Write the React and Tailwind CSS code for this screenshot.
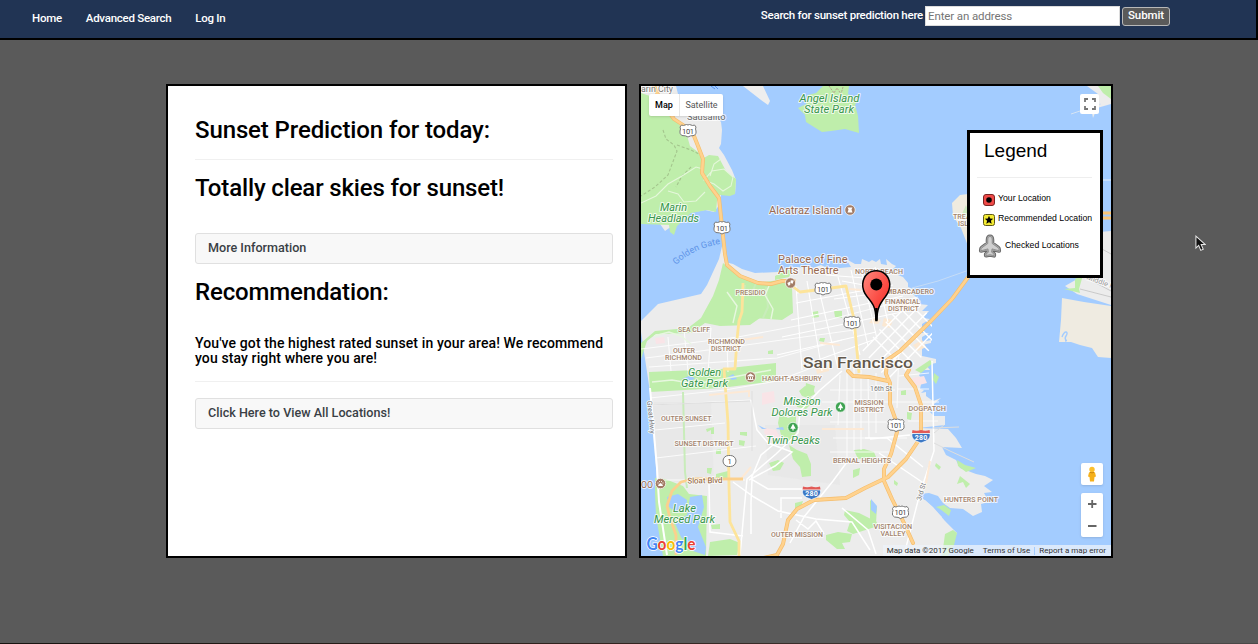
import React from "react";

const WATER = "#a3ccff";
const LAND = "#ececec";
const PARK = "#bfeeab";
const ROAD = "#fbc677";
const YELLOW = "#fde49a";

function Label({ x, y, w, size = 7, fill = "#a2836c", weight = 400, italic = false, rotate, children }) {
  return (
    <text
      x={x}
      y={y}
      textLength={w}
      lengthAdjust="spacingAndGlyphs"
      fontSize={size}
      fontWeight={weight}
      fontStyle={italic ? "italic" : "normal"}
      fill={fill}
      stroke="#ffffff"
      strokeOpacity="0.75"
      strokeWidth="2"
      strokeLinejoin="round"
      paintOrder="stroke"
      transform={rotate ? `rotate(${rotate} ${x} ${y})` : undefined}
    >
      {children}
    </text>
  );
}

const parkLabels = [
  ["Angel Island", 799.5, 102, 60],
  ["State Park", 804, 112.5, 50],
  ["Marin", 660, 210.5, 27],
  ["Headlands", 648, 221.5, 51],
  ["Golden", 688, 376, 33],
  ["Gate Park", 681, 387, 47],
  ["Mission", 783.5, 404.5, 37],
  ["Dolores Park", 771.5, 415.5, 61],
  ["Twin Peaks", 766, 444, 54],
  ["Lake", 673, 512, 23],
  ["Merced Park", 654, 522.5, 61],
];

const districtLabels = [
  ["PRESIDIO", 735.5, 294.5, 30],
  ["NORTH BEACH", 855, 273.5, 48],
  ["EMBARCADERO", 882, 293.5, 52],
  ["FINANCIAL", 885, 304, 35],
  ["DISTRICT", 888, 311, 31],
  ["SEA CLIFF", 678, 332, 32],
  ["RICHMOND", 708, 344, 37],
  ["DISTRICT", 711, 351, 30],
  ["OUTER", 673, 352.5, 22],
  ["RICHMOND", 665, 360, 37],
  ["HAIGHT-ASHBURY", 762, 381, 60],
  ["MISSION", 854.5, 405, 29],
  ["DISTRICT", 854, 412, 30],
  ["DOGPATCH", 908.5, 410.5, 37.5],
  ["OUTER SUNSET", 661, 420.5, 50.5],
  ["SUNSET DISTRICT", 674.5, 446, 59],
  ["BERNAL HEIGHTS", 833, 462.5, 58],
  ["HUNTERS POINT", 944, 502, 54],
  ["VISITACION", 873.5, 529, 38.5],
  ["VALLEY", 880.5, 536, 25],
  ["OUTER MISSION", 771, 536.5, 52],
];

const usShields = [[688, 131], [722, 228], [823, 289], [852, 323], [896, 425.5], [900.5, 512.5]];
const interstates = [[811.5, 492], [921, 435.5]];

const greens = [
  "M775 276l13-7 4 2-3 6-14 3z", "M812 312l6-1 1 6-7 1z", "M834 311l8 0 0 7-7-1z", "M768 351l5-1 0 4-5 0z",
  "M820 338l5 0-1 4-5-1z", "M799 391l6-5 8 2 2 6-7 4-6-2z", "M796 401l10 2 4-6 4 4-8 8-9-2z",
  "M780 413l8 5 8-3 0 18-8 10-7-8-3-12z", "M789 445l8 5 10 4 4 10 0 12-9 1-2-10-7-8z", "M769 463l9-3 6 3-4 7-7 1z",
  "M854 450l10-1 10 3 2 5-18 2z", "M706 429l8-2 0 7-3 0 0-4-4 2z", "M740 432l7 0 0 4-7-1z", "M739 440l6 1-1 5-5-1z",
  "M716 450l5-1 0 5-5 0z", "M707 468l5 0-1 6-4-1z", "M716 474l12-3 0 7-12 1z", "M795 503l8-2-2 6-6 4z",
  "M853 470l7-2-1 7-6 3z", "M907 412l5 1-1 7-4-1z", "M901 391l5-1 0 5-5 0z", "M845 510l14 3 8 4 10 5-2 5-22 7-6-3 3-9-6-7z",
  "M826 535l12-3 14 2-2 8-8 1 3 6-8 0-11-9z", "M710 542l20-3 10 4-3 12-29 1z", "M711 525l9-1 0 5-8 0z",
  "M870 500l7 7-1 16-6-2z", "M936 463l5 4-2 3-4-4z", "M957 460l8 5 11 3-10 4-8-6z", "M960 476l10 8-4 4-3-6-6 2z",
  "M936 507l8-2 7 5-2 6-9-7z", "M945 534l8-4 4 3-3 12-6 11-6 0z", "M894 480l4 3-1 3-3-2z", "M934 373l5 4-3 7-3-4z",
  "M915 370l15-10 3 3-12 10z", "M806 383l9 3-2 8-8-2z",
];

const pinks = ["M655 338l9-1 1 6-9 1z", "M762 393l12-2 1 11-13 3z", "M765 428l11 2 4 7-6 6-10-10z", "M912 378l12-2 3 7-12 3z"];
const creams = [
  "M898 301l10-3 3 9-12 2z", "M884 318l9 2-3 8-8-2z", "M913 345l9-5 4 7-8 4z", "M873 318l8 2-3 4-9-1z", "M816 369l13-3 0 5-12 3z",
];

function MapDrawing() {
  return (
    <svg viewBox="641 86 470 470" className="block h-full w-full" fontFamily="Roboto, sans-serif">
      <defs>
        <clipPath id="city">
          <path d="M725 262l8 2 9 5 13 4h23l20-5 50 0 10-5 20 0 12 0 15 5 7 10 8 13 8 13 10 13 3 12-1 20v27l1 28v20l5 30-1 35 20 30-5 60H640V345l18-17 43-10 15-25z" />
        </clipPath>
        <clipPath id="downtown">
          <path d="M862 350l32-38 22-14 16 22v28l-34 30h-12z" />
        </clipPath>
        <linearGradient id="pinFill" x1="0" y1="0" x2="1" y2="1">
          <stop offset="0" stopColor="#ff8a80" />
          <stop offset="0.55" stopColor="#fb4d45" />
          <stop offset="1" stopColor="#e8281f" />
        </linearGradient>
      </defs>
      <rect x="641" y="86" width="470" height="470" fill={WATER} />

      {/* Marin headlands */}
      <path d="M641 86h35l3 12 3 8 32 8 7 8 1 8-1 14-2 4 5 7 8 15 4 10-1 14-14 1-1 9-6 8-9-2-16 3-17 13-7 5-5-7-19-3z" fill={LAND} />
      <path d="M641 93l12 4 7 10 14 12 12 13 4 14 8 6 4 7 7-4 9 1 8 15 10 8-1 15-5 2-10-1-3 6-1 11-9-2-16 3-14 13-3 9-4-3-1-7-31-1z" fill={PARK} />
      <g fill="none" stroke="#a4c58d" strokeWidth="1.1" strokeDasharray="3 2">
        <path d="M663 130l3 9 8 6 3 6-9 24-13 12-14 9M677 145l14 5 8 4M691 167l-9 9-6 11" />
      </g>
      <g fill="none" stroke="#e5f7db" strokeWidth="1.1">
        <path d="M641 203l15-7 12-12 14-8 14-9 7 2M668 191l10 3 6 8 12-1 9-9M704 180l8-9 12-2 9 8-2 9-8 5-9-7zM710 176l4-12 7-5" />
      </g>
      <path d="M743 86h20l7 15-2 4-7-5z" fill="#eeeeee" />
      <path d="M711 86l4 3M715 86l3 3" stroke="#5794f2" fill="none" />

      {/* Islands and the east shore */}
      <path d="M823 86h26l-1 8 10 6-3 5 3 11 1 17-14-4-14 2-9 1-16-10-1-7-7-7 8-4 2-9 8-2z" fill={PARK} />
      <path d="M829 86l5 7 3-5 4 6 2-7" stroke="#b6a58d" strokeDasharray="2 1" fill="none" />
      <path d="M952 203l8-8 8-1v52l-7-18-8-12z" fill="#efebdf" />
      <path d="M962 214l4-9 3 8-2 8z" fill="#cce8c0" />
      <path d="M1087 86h24v18l-14 4-4 10-3-16 8-8z" fill={LAND} />
      <path d="M1098 86h13v13l-8-6z" fill={PARK} />
      <path d="M1071 114l18-6 12-4" stroke="#d6e4f4" fill="none" />
      <path d="M1099 232l12-1v74l-34-11-12-8 14-8 20-18z" fill={LAND} />
      <path d="M1102 249l9 5M1083 276l28 15M1080 289l31 8" stroke="#c9c9c9" fill="none" />
      <Label x={1086} y={279} w={34} size={7} fill="#999" rotate={20}>Middle Hb</Label>
      <path d="M1075 279l8-4-4 14 1 4-16-4 11-1z" fill={PARK} />
      <path d="M1062 298l22 4 27 4v52l-13-1-6-9-12-3-9-3-12 0 2-22z" fill="#efebe1" />
      <path d="M1062 337c3-8 7-5 4-1s3 5-1 5" stroke={WATER} fill="none" strokeWidth="1.4" />
      <path d="M1101 213h10M1101 218h10" stroke={ROAD} strokeWidth="3" />
      <path d="M1101 180h10" stroke="#e8eef5" />

      {/* San Francisco peninsula */}
      <path d="M664 500H925l8 7 12 14 12 12-8 14-9 9H664z" fill={LAND} />
      <path
        d="M725 262l8 2 9 5 13 4 23-1 8-4 12-1 4 1 6-3 5 3 8-3 8 4 22-2-5-8 9 5 6 0 1-5 7 3 3-2 4 2 4-3 1 5 6 1-1-6 6 5 4 2-4 4 7 2-1 3 5 2 5 6 0 4 5 2 0 5 4 4 4 3-2 3 9 1-6 6 7 0-6 7 7 1-8 5 0 9 7 0-7 4v5l9-2v3l-9 2v11l5 1 9 2v4l-10 2 4 5-8 0-3 5 3 5-2 9 4 1-3 3 5-1v4l7 5 8-3-7 6 0 4-4 4 4 4 11 0 0 9-27 3 30 1 8 9 6 10-20-1 4 8 10 5 4 8 16 6 9 2 8 4-9 6 8 6-8 1 5 9-8 2 1 8-9 4-10-7-13-1-7-5-5-7-9-3-11 1 12 11 12 12-8 14v9H664l-6-41-3-50-5-57-9-60v-11l17-17 43-10 6-9 12-26 4-17z"
        fill={LAND}
      />
      <path d="M650 402l61 0 3 83-57-5zM765 425l70 0 5 60-72-10z" fill="#e6e6e6" opacity=".55" />
      {greens.map((d) => <path key={d} d={d} fill={PARK} />)}
      {pinks.map((d) => <path key={d} d={d} fill="#f9e4e7" />)}
      {creams.map((d) => <path key={d} d={d} fill="#fbe8d2" />)}
      <path d="M723 263l15 12 18 8 24-3 12 7 1 26-11 7-28-2-40 0-13 0 12-22 6-16z" fill={PARK} />
      <path d="M641 343l14-12 33-3 13-10 30-1 29 1-10 7-30 1-15-3-14 10-35 1-9 7-6 18-1-7z" fill={PARK} />
      <path d="M649 372l72-3 55-6v18l-55 7-71 4z" fill={PARK} />
      <path d="M655 478l10 1 18 7 6 8 18 2-1 60h-43l-7-40-1-23z" fill={PARK} />
      <path d="M667 497l11-3 9 6-1 9-9 4-8-6zM690 497l12-2 2 12-6 20 8 20-1 8-12-4-12-14-6-14 12-8zM758 425l6 3 3 1-5 0zM777 428l6-1 1 3-8-1zM682 379l7-3 6 2-4 3zM728 377l5-3 4 5-5 1z" fill={WATER} />
      <path d="M871 499l6 7-1 8-5-4z" fill={WATER} />

      <g clipPath="url(#city)" fill="none" stroke="#fff" strokeWidth="1.1">
        <path d="M641 349l97-12 90-17 90-23M646 358l93-12 115-16M649 367l128-9 65-18M650 398l75-8 52-9 37-14M653 405l98-5M655 430l70-7M656 458l100-12M663 480l65 0 17 0M684 329l4 42M711 328l-3 45M668 337l3 34M727 342l1 30" strokeOpacity=".8" />
        <path d="M796 286l6 84M807 281l15 90M820 294l18 74M838 277l22 78M851 270l17 76M861 269l16 70M875 267l13 55M796 303l97-18M791 320l112-24M782 337l120-25M777 355l99-23M818 360l55-20M826 275l64 5M842 281l54 10M834 299l63-8M797 293l50-8" />
        <path d="M847 372v90M854 368v82M861 370v80M868 375l1 63M876 373v60M840 375l-2 50M830 390h65M830 422h75M833 438h74M822 402h92M830 452h60M899 376l30-3M897 389h32M904 402h35M908 421h30M899 348l-2 60" strokeOpacity=".8" />
        <path d="M842 371l-23 20-19 20-2 22-22 21-29 25-7 76M847 462l-14 19-29 36-14 26M751 400l6 30 11 13 24 9-17 14-26 14M773 445l-12 10-10 24 17 10 36 0M733 482l21 15 24 14 38 8 36 3 18 28M752 480l-1 22 0 32M781 518v-20l21 0M842 508l26 22 8 24M796 520l12 9 8-8 8 13M870 439l40-4M865 438l22 0 36 29M879 453l46 31M709 484l1 48 33 4M932 361l2 90-14 42-16 62" strokeWidth="1.5" />
        <path d="M650 388l7 80 2 34 8 53" strokeWidth="2" />
      </g>
      <g clipPath="url(#downtown)" stroke="#fff" strokeWidth="1.4" fill="none">
        <path d="M850 350l70-72M857 357l70-72M864 363l70-72M871 370l70-72M878 376l70-72M885 382l70-72M856 320l60 60M863 313l60 60M870 306l60 60M877 299l60 60M884 292l60 60M891 285l60 60M898 280l60 60" />
      </g>
      <g fill="none" stroke="#c8ecba" strokeWidth="2">
        <path d="M683 392l2 80 2 16M745 285l-3 24M766 287l2 20-5 11M756 283l-4 10" />
      </g>
      <g fill="none" stroke="#e7f7df" strokeWidth="1.4">
        <path d="M727 292l10 14-4 17M769 286l-4 9 8 14-2 10M652 382l20-2 23 4 22-4 54-10M654 336l15-4 12 4 10 8" />
      </g>
      <g fill="none" stroke="#dedede" strokeWidth="1">
        <path d="M934 443l16 8 24 11M933 428l26-1M934 433l10-8M650 405l100-4M752 391v60" />
      </g>
      <g fill="none" stroke={YELLOW} strokeWidth="2.8" strokeLinejoin="round">
        <path d="M743 283l-1 29-3 9-2 18-2 30-11 0 4 54 1 64 1 35 9 19 0 15" />
        <path d="M792 286l8 6 24-3 22-3 8 33 5 54" />
      </g>
      <g fill="none" stroke="#fde9d5" strokeWidth="2">
        <path d="M709 395l40-4 0 6M822 429l42 0M740 480l11-13M820 343l20 2M741 340l22-3M849 289l12 1M930 461l-5 28" />
      </g>

      <path
        id="highways"
        fill="none"
        stroke="#f5bd6c"
        strokeWidth="3.900"
        strokeLinejoin="round"
        strokeLinecap="round"
        d="M654 86l7 15 13 18 18 12 6 15 5 13-1 14 8 13 9 12 3 29 3 27 2 11 13 11 18 7 13 1 11-3 12 0M969 276l-17 23-22 23-30 29-13 9-1 14 4 9 0 21 5 14 2 14-6 22-7 15 0 12 8 18 12 24 9 20M848 371l5 5 16 1 19 4M909 370l-3 5 9 12 6 18 0 32-15 22-18 18-23 11-19 10-32 2-17 9-9 11-5 24-6 11-18 4-15 8"
      />
      <path
        fill="none"
        stroke="#ffd28e"
        strokeWidth="2.600"
        strokeLinejoin="round"
        strokeLinecap="round"
        d="M654 86l7 15 13 18 18 12 6 15 5 13-1 14 8 13 9 12 3 29 3 27 2 11 13 11 18 7 13 1 11-3 12 0M969 276l-17 23-22 23-30 29-13 9-1 14 4 9 0 21 5 14 2 14-6 22-7 15 0 12 8 18 12 24 9 20M848 371l5 5 16 1 19 4M909 370l-3 5 9 12 6 18 0 32-15 22-18 18-23 11-19 10-32 2-17 9-9 11-5 24-6 11-18 4-15 8"
      />
      <path d="M743 479l-22 0-28 0-12 3-9 9-5 15 3 12 6 17v20" stroke="#fbd08d" strokeWidth="2.800" fill="none" strokeLinejoin="round" />
      <path d="M969 270l-31 11-26 7" stroke="#c6dcf6" fill="none" />

      {parkLabels.map(([t, x, y, w]) => (
        <Label key={t} x={x} y={y} w={w} size={10.5} italic fill="#38974c">{t}</Label>
      ))}
      {districtLabels.map(([t, x, y, w]) => (
        <Label key={t + x} x={x} y={y} w={w} size={7} weight={500}>{t}</Label>
      ))}
      <Label x={641} y={92} w={32} size={9} fill="#777">arin City</Label>
      <Label x={687} y={119.5} w={38.5} size={9} fill="#666">Sausalito</Label>
      <Label x={769} y={214} w={73} size={10.5} fill="#99694f">Alcatraz Island</Label>
      <Label x={778} y={262.500} w={69.500} size={10.5} fill="#99694f">Palace of Fine</Label>
      <Label x={778} y={273.500} w={60.500} size={10.5} fill="#99694f">Arts Theatre</Label>
      <Label x={803} y={367.500} w={110} size={15} weight={500} fill="#62584c">San Francisco</Label>
      <Label x={870} y={390.500} w={22} size={7} fill="#777">16th St</Label>
      <Label x={687.500} y={483.500} w={35} size={8} fill="#8b5a30" rotate={-1}>Sloat Blvd</Label>
      <Label x={641} y={487.500} w={12} size={9} fill="#99694f">OO</Label>
      <Label x={647} y={401} w={33} size={7} fill="#777" rotate={84}>Great Hwy</Label>
      <Label x={921} y={501} w={18} size={7} fill="#777" rotate={-74}>3rd St</Label>
      <Label x={953} y={218.500} w={22} size={7} weight={500}>TREAS</Label>
      <Label x={958} y={226} w={20} size={7} weight={500}>ISLAN</Label>
      <path id="gate" d="M676 265Q692 249 720 244" fill="none" />
      <text fontSize="9" fill="#5e94e8"><textPath href="#gate" textLength="50">Golden Gate</textPath></text>

      {usShields.map(([x, y]) => (
        <g key={`${x}-${y}`}>
          <path d={`M${x - 6.5} ${y - 6}q2 1 3.5 0 1.5-1 3 0 1.5-1 3 0 1.500 1 3.500 0l1.500 2q-1 2 0 4 1 3-2 4.500-4 0-6 1.500-2-1.500-6-1.500-3-1.500-2-4.500 1-2 0-4z`} fill="#fff" stroke="#777" />
          <text x={x} y={y + 2.700} fontSize="7.500" textAnchor="middle" textLength="12" fill="#444">101</text>
        </g>
      ))}
      {interstates.map(([x, y]) => (
        <g key={x}>
          <path d={`M${x - 9} ${y - 2}h18q1 5-4 7.500L${x} ${y + 7.500}l-5-2q-5-2.500-4-7.500z`} fill="#3d79c5" stroke="#fff" strokeWidth=".7" />
          <path d={`M${x - 8.500} ${y - 5.500}q4 1.500 8.500 0 4.500 1.500 8.500 0l.5 3h-18z`} fill="#e25b57" />
          <text x={x} y={y + 4} fontSize="7" fontWeight="700" textAnchor="middle" textLength="12.500" fill="#fff">280</text>
        </g>
      ))}
      <rect x="723" y="455.500" width="13" height="11" rx="5.500" fill="#fff" stroke="#777" />
      <text x="729.500" y="463.700" fontSize="7.500" textAnchor="middle" fill="#444">1</text>

      {[[850, 210], [790.5, 283], [750.5, 377], [660.5, 483.5]].map(([x, y], i) => (
        <g key={x}>
          <circle cx={x} cy={y} r="5.200" fill="#a27b65" stroke="#fff" strokeOpacity=".7" />
          {i === 0 && <path d={`M${x - 2.500} ${y - 2.500}h5l-1 2 1 3h-5l1-3z`} fill="#fff" />}
          {i === 1 && <path d={`M${x - 3.200} ${y}l3-1.500v3l-1.500 1.500zM${x + 3.200} ${y - 2.500}l-3-.3v2.800l2 .8z`} fill="#fff" />}
          {i === 2 && <path d={`M${x - 3} ${y - 1}l3-2 3 2zM${x - 2} ${y}v2M${x} ${y}v2M${x + 2} ${y}v2M${x - 3} ${y + 2.500}h6`} fill="#fff" stroke="#fff" strokeWidth=".9" />}
          {i === 3 && <path d={`M${x - 2} ${y + 2}q2-4 4 0zM${x - 3} ${y - 0.500}h1M${x - 1.300} ${y - 2}h.8M${x + 0.700} ${y - 2}h.8M${x + 2} ${y - 0.500}h1`} fill="#fff" stroke="#fff" strokeWidth="1" />}
        </g>
      ))}
      {[[840.5, 407], [793, 427.5]].map(([x, y]) => (
        <g key={x}>
          <circle cx={x} cy={y} r="5.200" fill="#3fa352" stroke="#fff" strokeOpacity=".7" />
          <path d={`M${x} ${y - 3.700}l2.700 5h-5.400zM${x - 0.600} ${y + 1}h1.200v2h-1.200z`} fill="#fff" />
        </g>
      ))}

      {/* Marker */}
      <path d="M876 320.500C876 307 872.500 303 867 296.500C863 291.500 862.500 288 862.700 284C863.500 275.500 869 270.700 876.200 270.700S889.200 276 889.800 284C890 289 888.500 292.500 885.500 296.500C880 303.500 877 308 876.800 320.500z" fill="url(#pinFill)" stroke="#000" strokeWidth="1.500" />
      <path d="M876.400 308v12.500" stroke="#000" strokeWidth="2.500" />
      <circle cx="876.300" cy="284.500" r="6" fill="#000" />

      {/* Google wordmark */}
      <g fontFamily="Lato, sans-serif" fontSize="16.500" stroke="#fff" strokeWidth="1.500" paintOrder="stroke" fontWeight="700">
        <text x="646.500" y="550" textLength="49" lengthAdjust="spacingAndGlyphs">
          <tspan fill="#4285f4">G</tspan><tspan fill="#ea4335">o</tspan><tspan fill="#fbbc05">o</tspan>
          <tspan fill="#4285f4">g</tspan><tspan fill="#34a853">l</tspan><tspan fill="#ea4335">e</tspan>
        </text>
      </g>
    </svg>
  );
}

const PLANE =
  "M12 2.500c-1.600 0-2.200 1.600-2.200 3.600v3.400L4 13.700c-.9.700-1 1.600-1 3l7-1.800.4 3.300-2.400 1.900v1.400l4-.8 4 .8v-1.400l-2.400-1.900.4-3.300 7 1.800c0-1.400-.1-2.300-1-3l-5.800-4.200V6.100c0-2-.6-3.600-2.200-3.600z";

function PlaneMark() {
  return (
    <svg viewBox="0 0 24 24" className="h-6 w-6 shrink-0" strokeLinejoin="round">
      <path d={PLANE} fill="#6a6a6a" stroke="#6a6a6a" strokeWidth="4.200" />
      <path d={PLANE} fill="#b4b4b4" stroke="#a9a9a9" strokeWidth="2.200" />
      <path d={PLANE} fill="#cfcfcf" stroke="#808080" strokeWidth=".7" />
    </svg>
  );
}

function Legend() {
  return (
    <div className="absolute left-[326px] top-[44px] h-[148px] w-[136px] border-[3px] border-black bg-white pl-[7px] pr-2 font-['Liberation_Sans',Arial,sans-serif] text-black">
      <h3 className="pl-[7px] pt-[6px] text-[19px] leading-6">Legend</h3>
      <hr className="mt-[14px] border-[#eeeeee]" />
      <div className="mt-[14px] flex h-[13px] items-center gap-[3px] pl-[6px] text-[8.700px] whitespace-nowrap">
        <svg viewBox="0 0 12 12" className="mt-[3px] h-3 w-3 shrink-0">
          <rect x=".5" y=".5" width="11" height="11" rx="2.500" fill="#f04a48" stroke="#7a2422" />
          <circle cx="6" cy="6" r="2.800" />
        </svg>
        <span>Your Location</span>
      </div>
      <div className="mt-[7px] flex h-[13px] items-center gap-[3px] pl-[6px] text-[8.700px] whitespace-nowrap">
        <svg viewBox="0 0 12 12" className="mt-[3px] h-3 w-3 shrink-0">
          <rect x=".5" y=".5" width="11" height="11" rx="2" fill="#f3ea32" stroke="#5c5818" />
          <path d="M6 1.800l1.200 2.700 3 .3-2.300 1.900.8 3L6 8.200 3.300 9.700l.8-3-2.300-1.900 3-.3z" />
        </svg>
        <span>Recommended Location</span>
      </div>
      <div className="mt-[9px] flex items-center gap-[3px] pl-[1px] text-[8.700px] whitespace-nowrap">
        <PlaneMark />
        <span>Checked Locations</span>
      </div>
    </div>
  );
}

function MapPanel() {
  return (
    <section className="relative h-[474px] w-[474px] overflow-hidden border-2 border-black bg-[#a3ccff]">
      <MapDrawing />
      <div className="absolute left-2 top-[8px] flex h-[22px] w-[74px] items-center rounded-[2px] bg-white text-[9px] shadow-sm">
        <span className="w-[30px] pt-px text-center font-medium text-black">Map</span>
        <span className="flex h-full flex-1 items-center justify-center border-l border-[#e6e6e6] pt-px text-[#565656]">Satellite</span>
      </div>
      <div className="absolute left-[439px] top-[8px] flex h-[20px] w-[19px] items-center justify-center rounded-[2px] bg-white">
        <svg viewBox="0 0 12 12" className="h-3 w-3" fill="none" stroke="#777" strokeWidth="1.800">
          <path d="M1 4V1h3M8 1h3v3M11 8v3H8M4 11H1V8" />
        </svg>
      </div>
      <Legend />
      <div className="absolute left-[440px] top-[377px] flex h-[22px] w-[22px] items-center justify-center rounded-[2px] bg-white shadow-sm">
        <svg viewBox="0 0 10 16" className="h-4 w-[10px]">
          <path d="M2 6.500Q5 4.500 8 6.500l1 4-1.500.5-.5 4.500H3L2.500 11 1 10.500z" fill="#f5b01a" />
          <circle cx="5" cy="3.500" r="2.700" fill="#fbbf2d" />
          <path d="M3 6.300q2 1.200 4 0" stroke="#c98410" fill="none" />
        </svg>
      </div>
      <div className="absolute left-[440px] top-[407px] flex h-[44px] w-[22px] flex-col rounded-[2px] bg-white shadow-sm">
        <svg viewBox="0 0 22 44" className="h-full w-full" stroke="#666" strokeWidth="1.800">
          <path d="M7 11h8.500M11.200 7v8M7 33h8.500" />
        </svg>
      </div>
      <div className="absolute bottom-0 right-0 flex h-[11px] items-center bg-[#eef3fa]/75 text-[8px] leading-none whitespace-nowrap text-[#333]">
        <span className="pl-1">Map data ©2017 Google</span>
        <span className="ml-[9px] pr-1">Terms of Use</span>
        <span className="border-l border-[#a3ccff] pl-[4px] pr-[5px]">Report a map error</span>
      </div>
    </section>
  );
}

function Panel({ children, className }) {
  return (
    <button className={`flex h-[31px] w-full items-center rounded-[3px] border border-[#e0e0e0] bg-[#f8f8f8] pl-[12px] text-[12.600px] font-medium text-[#3a3f45] ${className}`}>
      {children}
    </button>
  );
}

export default function App() {
  return (
    <div className="relative flex h-[644px] w-[1258px] flex-col overflow-hidden bg-[#5a5a5a] font-[Roboto,sans-serif]">
      <header className="flex h-[40px] shrink-0 items-start border-r-2 border-b-2 border-black bg-[#213454] text-white">
        <nav className="flex gap-6 pl-8 pt-[9px] text-[11.500px] leading-[18px] font-medium tracking-[-0.270px]">
          <a>Home</a>
          <a>Advanced Search</a>
          <a>Log In</a>
        </nav>
        <form className="ml-auto flex items-center pr-[86px] pt-[6px] text-[11.500px] font-medium tracking-[-0.260px]">
          <label className="mr-[2px]">Search for sunset prediction here</label>
          <input
            className="h-[20px] w-[195px] border border-[#dcdcdc] bg-white px-[2px] text-[11.500px] font-normal tracking-[-0.120px] placeholder:text-[#757575]"
            placeholder="Enter an address"
          />
          <button type="button" className="ml-[2px] mt-px flex h-[19px] w-[48px] items-center justify-center rounded-[3px] border border-[#b8b8b8] bg-[#5a5a5a] pb-px tracking-[-0.100px]">Submit</button>
        </form>
      </header>

      <main className="flex gap-[12px] pl-[166px] pt-[44px]">
        <section className="h-[474px] w-[461px] border-2 border-black bg-white pl-[27px] pr-[12px] pt-[31px] text-black">
          <h2 className="text-[24px] leading-[26px] font-medium tracking-[-0.120px]">Sunset Prediction for today:</h2>
          <hr className="mt-4 border-[#f0f0f0]" />
          <h2 className="mt-[15px] text-[24px] leading-[26px] font-medium tracking-[-0.150px]">Totally clear skies for sunset!</h2>
          <Panel className="mt-[32px]">More Information</Panel>
          <h2 className="mt-[15px] text-[24px] leading-[26px] font-medium tracking-[-0.150px]">Recommendation:</h2>
          <p className="mt-[31px] text-[14px] leading-[15px] font-medium tracking-[0.110px]">
            You've got the highest rated sunset in your area! We recommend<br />you stay right where you are!
          </p>
          <hr className="mt-[15px] border-[#f0f0f0]" />
          <Panel className="mt-[16px]">Click Here to View All Locations!</Panel>
        </section>
        <MapPanel />
      </main>

      <svg viewBox="0 0 12 18" className="absolute left-[1195px] top-[235px] h-[17px] w-[11px]">
        <path d="M1 1v13l3-3 2.300 5.500 2.700-1.200L6.700 10H11z" fill="#111" stroke="#e8e8e8" strokeWidth="1.100" />
      </svg>
      <div className="mt-auto h-px w-full bg-gradient-to-r from-[#17130f] via-[#34241f] to-[#4b4948]" />
    </div>
  );
}
